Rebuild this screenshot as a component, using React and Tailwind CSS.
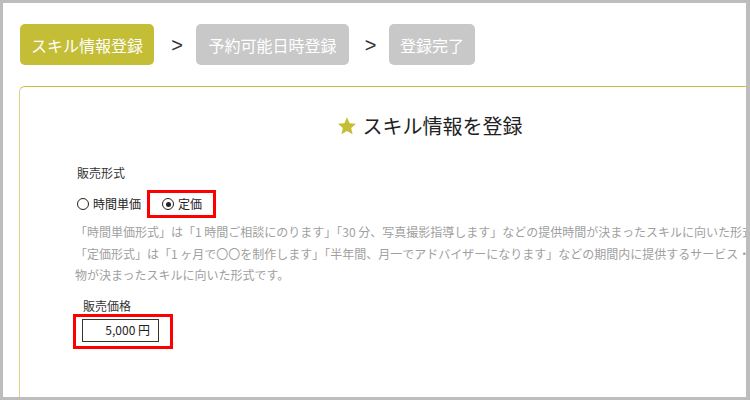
const jp = { fontFamily: '"Noto Sans CJK JP", "Noto Sans", sans-serif' };

function Radio({ checked }) {
  return (
    <span className="flex h-[12px] w-[12px] items-center justify-center rounded-full border-[1.5px] border-[#222]">
      {checked && <span className="h-[5px] w-[5px] rounded-full bg-[#222]" />}
    </span>
  );
}

function Star() {
  return (
    <svg width="20" height="20" viewBox="0 0 24 24">
      <path
        d="M12 1.5l3.1 7.1 7.7.7-5.8 5.1 1.7 7.6L12 18l-6.7 4 1.7-7.6-5.8-5.1 7.7-.7z"
        fill="#c4bd36"
      />
    </svg>
  );
}

export default function App() {
  return (
    <div
      className="box-border h-[400px] w-[750px] overflow-hidden border-t-[3px] border-b-[3px] border-l-[3px] border-r-[4px] border-[#bdbdbd] bg-white pl-[16px] pt-[21px]"
      style={jp}
    >
      {/* steps */}
      <div className="ml-px flex items-center">
        <div className="flex h-[41px] w-[134px] items-center justify-center rounded-[5px] bg-[#c4bd36] text-[16px] text-white">
          スキル情報登録
        </div>
        <span
          className="w-[42px] pl-[4px] text-center text-[20px] leading-none text-[#333]"
          style={{ fontFamily: '"Liberation Sans", sans-serif' }}
        >
          &gt;
        </span>
        <div className="flex h-[41px] w-[153px] items-center justify-center rounded-[5px] bg-[#c8c8c8] text-[16px] text-white">
          予約可能日時登録
        </div>
        <span
          className="w-[40px] pl-[3px] text-center text-[20px] leading-none text-[#333]"
          style={{ fontFamily: '"Liberation Sans", sans-serif' }}
        >
          &gt;
        </span>
        <div className="flex h-[41px] w-[86px] items-center justify-center rounded-[5px] bg-[#c8c8c8] text-[16px] text-white">
          登録完了
        </div>
      </div>

      {/* card */}
      <div className="mt-[21px] h-[400px] w-[821px] rounded-tl-[6px] border border-[#c6c03a] border-l-[#d9d584] pl-[57px] pt-[25px]">
        <div className="-ml-[57px] flex items-center justify-center gap-[6px]">
          <Star />
          <span className="text-[20px] leading-[28px] text-[#222]">スキル情報を登録</span>
        </div>

        <div className="mt-[24px] text-[12px] leading-[18px] text-[#333]">販売形式</div>

        <div className="mt-[8px] flex items-center text-[12px] text-[#222]">
          <Radio />
          <span className="ml-[4px]">時間単価</span>
          <div className="ml-[6px] flex h-[28px] items-center border-[3px] border-[#ff0000] pl-[12px] pr-[11px]">
            <Radio checked />
            <span className="ml-[4px]">定価</span>
          </div>
        </div>

        <p className="-ml-[2px] mt-[3px] whitespace-nowrap text-[12px] leading-[21.5px] text-[#a0a0a0]">
          「時間単価形式」は「1 時間ご相談にのります」「30 分、写真撮影指導します」などの提供時間が決まったスキルに向いた形式です。
          <br />
          「定価形式」は「1 ヶ月で〇〇を制作します」「半年間、月一でアドバイザーになります」などの期間内に提供するサービス・成果
          <br />
          物が決まったスキルに向いた形式です。
        </p>

        <div className="ml-[6px] mt-[12px] text-[12px] leading-[16px] text-[#333]">販売価格</div>
        <div className="-ml-[4px] h-[35px] w-[100px] border-[3px] border-[#ff0000] pl-[6px] pt-[2px]">
          <div className="flex h-[23px] w-[77px] items-center justify-end border border-[#333] pr-[8px] text-[12px] text-[#222]">
            5,000 円
          </div>
        </div>
      </div>
    </div>
  );
}
